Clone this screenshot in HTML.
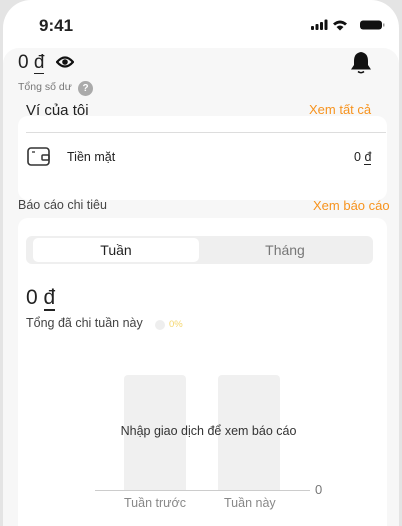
<!DOCTYPE html>
<html><head><meta charset="utf-8"><style>
*{margin:0;padding:0;box-sizing:border-box}
html,body{width:402px;height:526px;overflow:hidden}
body{background:#e4e4e4;font-family:"Liberation Sans","Noto Sans CJK SC",sans-serif;position:relative;color:#222}
.a{position:absolute}
.phone{left:3px;top:0;width:396px;height:526px;background:#fff;border-radius:28px 28px 0 0}
.hdr{left:3px;top:48px;width:396px;height:478px;background:#f7f7f7;border-radius:16px 16px 0 0}
.card{background:#fff;border-radius:10px}
.or{color:#f7931e}
u{text-decoration:none;border-bottom:1.5px solid #222;line-height:1}
</style></head><body>
<div class="a phone"></div>
<div class="a hdr"></div>
<div class="a" style="left:39px;top:16px;font-size:17px;font-weight:bold">9:41</div>
<svg class="a" style="left:311px;top:19px" width="75" height="12" viewBox="0 0 75 12">
<rect x="0" y="7" width="3" height="4" rx="1" fill="#111"/><rect x="4.5" y="5" width="3" height="6" rx="1" fill="#111"/><rect x="9" y="3" width="3" height="8" rx="1" fill="#111"/><rect x="13.5" y="0.5" width="3" height="10.5" rx="1" fill="#111"/>
<path d="M22 4.5 Q29 -1.5 36 4.5 L34 6.5 Q29 2.5 24 6.5Z M25.5 8 Q29 5 32.5 8 L29 11.5Z" fill="#111"/>
<rect x="49" y="1.5" width="22" height="9" rx="3" fill="#111"/><rect x="72" y="4.5" width="1.5" height="3" fill="#999"/>
</svg>
<div class="a" style="left:18px;top:52px;font-size:19px">0 <u>đ</u></div>
<svg class="a" style="left:56px;top:55px" width="18" height="14" viewBox="0 0 18 14"><path d="M1 7 Q9 -2 17 7 Q9 16 1 7Z" fill="none" stroke="#111" stroke-width="2.2"/><circle cx="9" cy="7" r="2.8" fill="#111"/></svg>
<svg class="a" style="left:350px;top:51px" width="22" height="24" viewBox="0 0 22 24"><path d="M11 1 Q18 2 18 10 L18 14 L21 18.5 L1 18.5 L4 14 L4 10 Q4 2 11 1Z" fill="#111"/><path d="M8 20.5 Q11 23 14 20.5" stroke="#111" stroke-width="1.5" fill="none"/></svg>
<div class="a" style="left:18px;top:81px;font-size:10.5px;color:#777">Tổng số dư</div>
<div class="a" style="left:78px;top:81px;width:15px;height:15px;border-radius:50%;background:#aaa;color:#fff;font-size:10px;text-align:center;line-height:15px;font-weight:bold">?</div>
<div class="a card" style="left:18px;top:116px;width:369px;height:84px"></div>
<div class="a" style="left:26px;top:102px;font-size:15px">Ví của tôi</div>
<div class="a or" style="left:309px;top:102px;font-size:13px">Xem tất cả</div>
<div class="a" style="left:26px;top:132px;width:360px;height:1px;background:#ddd"></div>
<svg class="a" style="left:27px;top:147px" width="24" height="20" viewBox="0 0 24 20"><rect x="1" y="1" width="21" height="17" rx="3" fill="none" stroke="#333" stroke-width="1.6"/><rect x="15" y="8" width="7" height="5" rx="1" fill="none" stroke="#333" stroke-width="1.5"/><line x1="5" y1="5" x2="8" y2="5" stroke="#333" stroke-width="1.3"/></svg>
<div class="a" style="left:67px;top:150px;font-size:12.5px">Tiền mặt</div>
<div class="a" style="left:354px;top:150px;font-size:12.5px">0 <u style="border-width:1px">đ</u></div>
<div class="a" style="left:18px;top:198px;font-size:12.5px;color:#444">Báo cáo chi tiêu</div>
<div class="a or" style="left:313px;top:198px;font-size:13px">Xem báo cáo</div>
<div class="a card" style="left:18px;top:218px;width:369px;height:308px;border-radius:10px 10px 0 0"></div>
<div class="a" style="left:26px;top:236px;width:347px;height:28px;background:#efefef;border-radius:6px"></div>
<div class="a" style="left:33px;top:238px;width:166px;height:24px;background:#fff;border-radius:5px;text-align:center;line-height:24px;font-size:14px">Tuần</div>
<div class="a" style="left:200px;top:238px;width:170px;height:24px;text-align:center;line-height:24px;font-size:14px;color:#777">Tháng</div>
<div class="a" style="left:26px;top:286px;font-size:21px">0 <u style="border-width:2px">đ</u></div>
<div class="a" style="left:26px;top:316px;font-size:12.5px;color:#444">Tổng đã chi tuần này</div>
<div class="a" style="left:155px;top:320px;width:10px;height:10px;border-radius:50%;background:#eee"></div>
<div class="a" style="left:169px;top:319px;font-size:9.5px;color:#f5d76e">0%</div>
<div class="a" style="left:124px;top:375px;width:62px;height:116px;background:#f0f0f0;border-radius:4px 4px 0 0"></div>
<div class="a" style="left:218px;top:375px;width:62px;height:116px;background:#f0f0f0;border-radius:4px 4px 0 0"></div>
<div class="a" style="left:95px;top:490px;width:215px;height:1px;background:#ccc"></div>
<div class="a" style="left:0;width:402px;top:424px;text-align:center;font-size:12.5px;color:#333;padding-left:15px">Nhập giao dịch để xem báo cáo</div>
<div class="a" style="left:315px;top:482px;font-size:13px;color:#777">0</div>
<div class="a" style="left:124px;top:496px;font-size:12.5px;color:#888">Tuần trước</div>
<div class="a" style="left:224px;top:496px;font-size:12.5px;color:#888">Tuần này</div>
</body></html>
